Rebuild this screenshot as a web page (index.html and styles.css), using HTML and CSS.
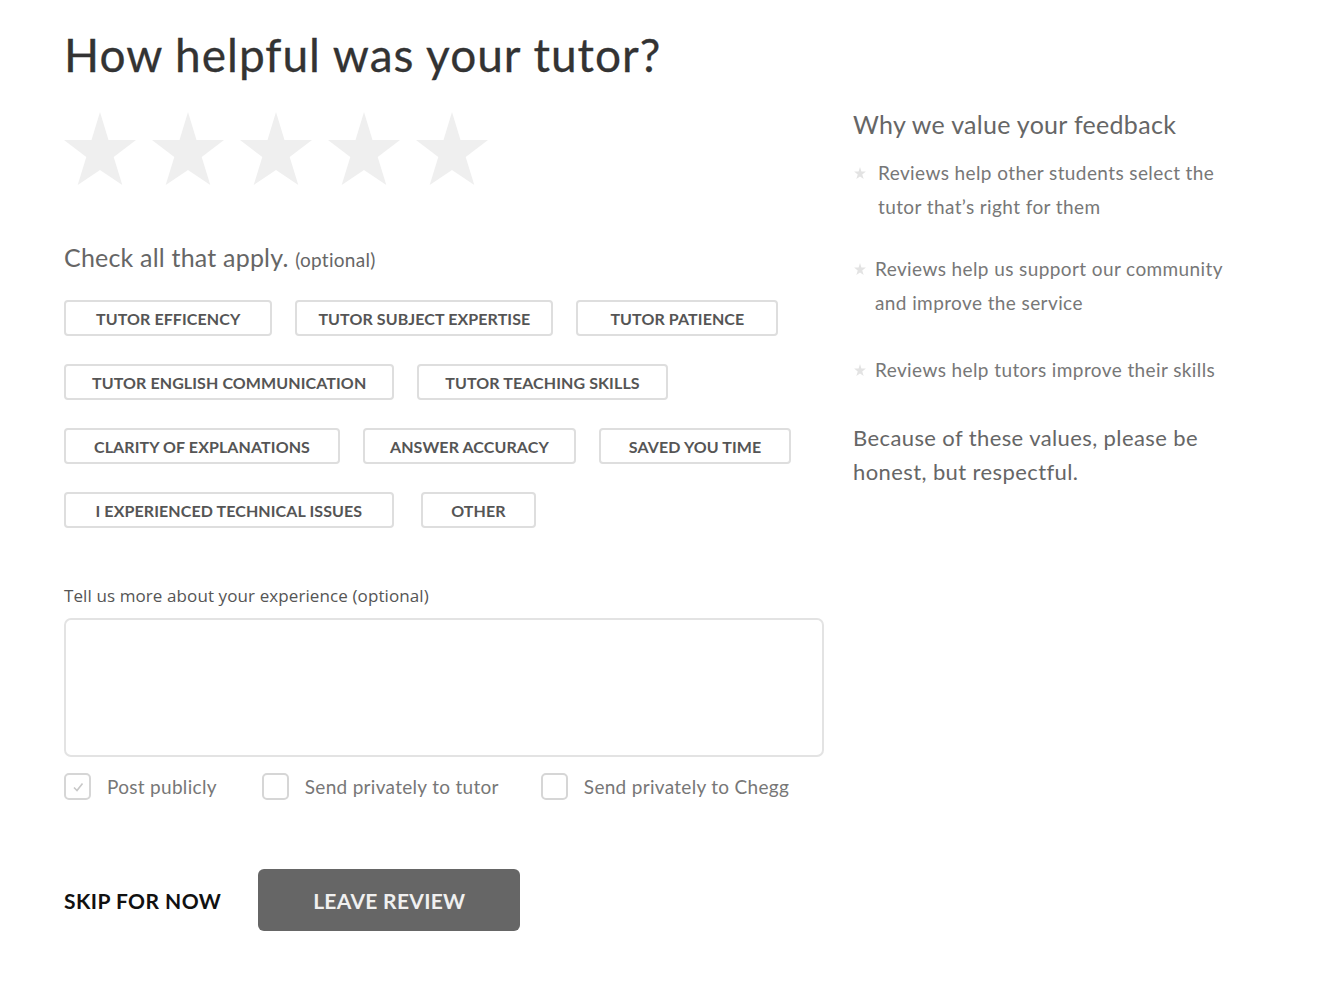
FILE: index.html
```html
<!DOCTYPE html>
<html lang="en">
<head>
<meta charset="utf-8">
<title>How helpful was your tutor?</title>
<link rel="stylesheet" href="styles.css">
</head>
<body>
<div class="page">
  <main class="main">
    <h1 class="title">How helpful was your tutor?</h1>
    <div class="stars">
      <svg class="star" viewBox="0 0 72 73" preserveAspectRatio="none"><polygon points="36,0 44.5,27.9 72,27.9 49.7,45.1 58.3,73 36,58 13.7,73 22.3,45.1 0,27.9 27.5,27.9"/></svg>
      <svg class="star" viewBox="0 0 72 73" preserveAspectRatio="none"><polygon points="36,0 44.5,27.9 72,27.9 49.7,45.1 58.3,73 36,58 13.7,73 22.3,45.1 0,27.9 27.5,27.9"/></svg>
      <svg class="star" viewBox="0 0 72 73" preserveAspectRatio="none"><polygon points="36,0 44.5,27.9 72,27.9 49.7,45.1 58.3,73 36,58 13.7,73 22.3,45.1 0,27.9 27.5,27.9"/></svg>
      <svg class="star" viewBox="0 0 72 73" preserveAspectRatio="none"><polygon points="36,0 44.5,27.9 72,27.9 49.7,45.1 58.3,73 36,58 13.7,73 22.3,45.1 0,27.9 27.5,27.9"/></svg>
      <svg class="star" viewBox="0 0 72 73" preserveAspectRatio="none"><polygon points="36,0 44.5,27.9 72,27.9 49.7,45.1 58.3,73 36,58 13.7,73 22.3,45.1 0,27.9 27.5,27.9"/></svg>
    </div>

    <p class="check-label">Check all that apply. <span class="optional">(optional)</span></p>

    <div class="chips">
      <div class="chip-row">
        <button class="chip chip-a">Tutor efficency</button>
        <button class="chip chip-b">Tutor subject expertise</button>
        <button class="chip chip-c">Tutor patience</button>
      </div>
      <div class="chip-row">
        <button class="chip">Tutor English communication</button>
        <button class="chip">Tutor teaching skills</button>
      </div>
      <div class="chip-row">
        <button class="chip chip-wide">Clarity of explanations</button>
        <button class="chip chip-narrow">Answer accuracy</button>
        <button class="chip chip-wide">Saved you time</button>
      </div>
      <div class="chip-row chip-row-last">
        <button class="chip chip-wider">I experienced technical issues</button>
        <button class="chip chip-other">Other</button>
      </div>
    </div>

    <label class="more-label" for="more">Tell us more about your experience (optional)</label>
    <textarea id="more" class="more"></textarea>

    <div class="options">
      <label class="option">
        <span class="box checked">
          <svg viewBox="0 0 16 16"><path d="M4 8.5 L7 11.5 L12.5 4.5"/></svg>
        </span>
        <span>Post publicly</span>
      </label>
      <label class="option">
        <span class="box"></span>
        <span>Send privately to tutor</span>
      </label>
      <label class="option option-last">
        <span class="box"></span>
        <span>Send privately to Chegg</span>
      </label>
    </div>

    <div class="actions">
      <button class="skip">SKIP FOR NOW</button>
      <button class="leave">LEAVE REVIEW</button>
    </div>
  </main>

  <aside class="side">
    <h2 class="side-title">Why we value your feedback</h2>
    <ul class="reasons">
      <li class="reason">
        <svg class="mini-star" viewBox="0 0 72 73"><polygon points="36,0 44.5,27.9 72,27.9 49.7,45.1 58.3,73 36,58 13.7,73 22.3,45.1 0,27.9 27.5,27.9"/></svg>
        <span class="reason-text r1">Reviews help other students select the tutor that’s right for them</span>
      </li>
      <li class="reason">
        <svg class="mini-star" viewBox="0 0 72 73"><polygon points="36,0 44.5,27.9 72,27.9 49.7,45.1 58.3,73 36,58 13.7,73 22.3,45.1 0,27.9 27.5,27.9"/></svg>
        <span class="reason-text">Reviews help us support our community and improve the service</span>
      </li>
      <li class="reason">
        <svg class="mini-star" viewBox="0 0 72 73"><polygon points="36,0 44.5,27.9 72,27.9 49.7,45.1 58.3,73 36,58 13.7,73 22.3,45.1 0,27.9 27.5,27.9"/></svg>
        <span class="reason-text">Reviews help tutors improve their skills</span>
      </li>
    </ul>
    <p class="because">Because of these values, please be honest, but respectful.</p>
  </aside>
</div>
</body>
</html>
```

FILE: styles.css
```css
* { box-sizing: border-box; }

html, body {
  margin: 0;
  padding: 0;
  background: #fff;
}

body {
  font-family: Lato, "Open Sans", Arial, sans-serif;
  color: #333;
}

.page {
  display: flex;
  gap: 29px;
  padding: 27px 0 0 64px;
}

.main {
  width: 760px;
  flex: none;
}

.title {
  margin: 0;
  font-size: 46px;
  line-height: 56px;
  font-weight: 400;
  color: #333;
  letter-spacing: 1px;
  -webkit-text-stroke: 0.3px #333;
}

.stars {
  display: flex;
  gap: 16px;
  margin-top: 29px;
  height: 73px;
}

.star {
  width: 72px;
  height: 73px;
  fill: #efefef;
}

.check-label {
  margin: 57px 0 0;
  font-size: 25px;
  line-height: 30px;
  color: #666;
  letter-spacing: 0.2px;
}

.optional {
  font-size: 19px;
  letter-spacing: 0.3px;
}

.chips {
  display: flex;
  flex-direction: column;
  gap: 28px;
  margin-top: 25px;
}

.chip-row {
  display: flex;
  gap: 23px;
}

.chip-row-last { gap: 27px; }

.chip {
  height: 36px;
  padding: 0 26px;
  border: 2px solid #dedede;
  border-radius: 4px;
  background: #fff;
  font-family: Lato, "Open Sans", Arial, sans-serif;
  font-weight: 700;
  font-size: 16px;
  color: #555;
  text-transform: uppercase;
  letter-spacing: 0.1px;
  white-space: nowrap;
}

.chip-a { padding: 0 30px; }
.chip-b { padding: 0 21px; }
.chip-c { padding: 0 32px; }
.chip-wide { padding: 0 28px; }
.chip-narrow { padding: 0 25px; }
.chip-wider { padding: 0 29.5px; }
.chip-other { padding: 0 28.5px; }

.more-label {
  display: block;
  margin-top: 58px;
  font-family: "Open Sans", Arial, sans-serif;
  font-size: 17px;
  line-height: 20px;
  color: #555;
  letter-spacing: 0.1px;
}

.more {
  display: block;
  width: 760px;
  height: 139px;
  margin-top: 12px;
  border: 2px solid #e3e3e3;
  border-radius: 7px;
  resize: none;
  background: #fff;
}

.options {
  display: flex;
  gap: 45px;
  margin-top: 16px;
  align-items: center;
}

.option {
  display: flex;
  align-items: center;
  gap: 16px;
  font-size: 19px;
  color: #777;
  letter-spacing: 0.3px;
  white-space: nowrap;
  flex: none;
}

.option-last { margin-left: -3px; }

.box {
  width: 27px;
  height: 27px;
  border: 2px solid #d6d6d6;
  border-radius: 5px;
  display: flex;
  align-items: center;
  justify-content: center;
  flex: none;
}

.box svg {
  width: 16px;
  height: 16px;
  fill: none;
  stroke: #c8c8c8;
  stroke-width: 1.6;
}

.actions {
  display: flex;
  align-items: center;
  gap: 37px;
  margin-top: 69px;
}

.skip {
  border: 0;
  background: none;
  padding: 0;
  font-family: Lato, "Open Sans", Arial, sans-serif;
  font-weight: 700;
  font-size: 21px;
  letter-spacing: 0.45px;
  color: #111;
}

.leave {
  width: 262px;
  height: 62px;
  border: 0;
  border-radius: 6px;
  background: #666;
  color: #f0f0f0;
  font-family: Lato, "Open Sans", Arial, sans-serif;
  font-weight: 700;
  font-size: 21px;
  letter-spacing: 0.3px;
}

.side {
  width: 385px;
  flex: none;
  padding-top: 80px;
}

.side-title {
  margin: 0;
  font-size: 25px;
  line-height: 34px;
  font-weight: 400;
  color: #666;
  letter-spacing: 0.3px;
}

.reasons {
  list-style: none;
  margin: 15px 0 0;
  padding: 0;
}

.reason {
  display: flex;
  align-items: flex-start;
  gap: 9px;
  font-size: 19px;
  line-height: 34px;
  color: #777;
  letter-spacing: 0.4px;
  margin-bottom: 28px;
}

.reason:nth-child(2) { margin-bottom: 33px; }
.reason:last-child { margin-bottom: 0; }

.mini-star {
  width: 12px;
  height: 12px;
  flex: none;
  margin-top: 11px;
  margin-left: 1px;
  fill: #e3e3e3;
}

.r1 { padding-left: 3px; }

.because {
  margin: 34px 0 0;
  font-size: 22px;
  line-height: 34px;
  color: #666;
  letter-spacing: 0.4px;
  width: 380px;
}
```
